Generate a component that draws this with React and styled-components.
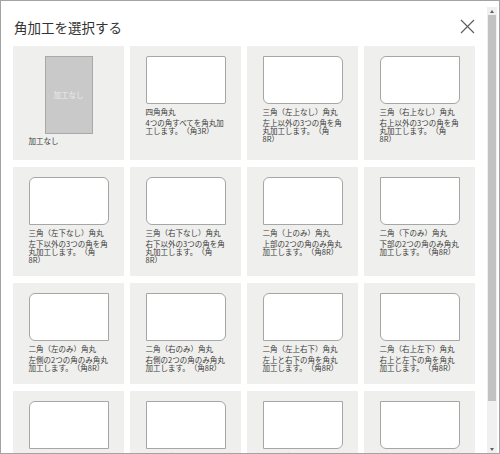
import React from 'react';
import styled, { createGlobalStyle } from 'styled-components';

const GlobalStyle = createGlobalStyle`
  html, body {
    margin: 0;
    padding: 0;
    background: #ffffff;
  }
  body {
    font-family: "Noto Sans CJK JP", "Noto Sans", sans-serif;
    text-spacing-trim: space-all;
  }
`;

const Frame = styled.div`
  box-sizing: border-box;
  width: 500px;
  height: 454px;
  border: 1px solid #a3a3a3;
  padding: 6px 2px 0 0;
  background: #ffffff;
  display: flex;
`;

const Scroller = styled.div`
  flex: 1;
  min-width: 0;
  height: 100%;
  overflow-y: auto;
  scrollbar-width: none;
`;

// classic scrollbar drawn beside the scrolling area
const ScrollBar = styled.div`
  width: 10px;
  height: 100%;
  display: flex;
  flex-direction: column;
  background: #f0f0f0;
`;

const ScrollButton = styled.div`
  height: 8px;
  display: flex;
  align-items: center;
  justify-content: center;
`;

const Arrow = styled.span`
  width: 0;
  height: 0;
  border-left: 2.5px solid transparent;
  border-right: 2.5px solid transparent;
  ${(p) =>
    p.$dir === 'up'
      ? 'border-bottom: 3px solid #606060;'
      : 'border-top: 3px solid #606060;'}
`;

const Track = styled.div`
  flex: 1;
  padding: 0 1px;
`;

const Thumb = styled.div`
  height: 386px;
  background: #c2c2c2;
`;

const Content = styled.div`
  padding: 0 12px 10px 12px;
`;

const Header = styled.div`
  height: 39px;
  display: flex;
  align-items: center;
  justify-content: space-between;
`;

const Title = styled.h2`
  margin: 0;
  padding-left: 1px;
  font-size: 13.5px;
  font-weight: 400;
  color: #333333;
  line-height: 1;
  position: relative;
  top: 1px;
`;

const CloseButton = styled.button`
  width: 16px;
  height: 16px;
  padding: 0;
  margin-right: 0;
  border: none;
  background: transparent;
  display: flex;
  align-items: center;
  justify-content: center;
  cursor: pointer;
`;

const Grid = styled.div`
  display: grid;
  grid-template-columns: repeat(4, 1fr);
  column-gap: 6px;
  row-gap: 7px;
`;

const Card = styled.div`
  background: #efefed;
  padding: 10px 0 12px;
  display: flex;
  justify-content: center;
  cursor: pointer;
`;

const Inner = styled.div`
  width: 80px;
  display: flex;
  flex-direction: column;
`;

const Shape = styled.div`
  box-sizing: border-box;
  width: 80px;
  height: 48px;
  background: #ffffff;
  border: 1px solid #a6a6a6;
  border-radius: ${(p) => p.$r};
`;

const NoneBox = styled.div`
  box-sizing: border-box;
  align-self: center;
  width: 48px;
  height: 78px;
  margin-bottom: -1px;
  background: #c9c9c9;
  border: 1px solid #a9a9a9;
  display: flex;
  align-items: center;
  justify-content: center;
  color: #ececec;
  font-size: 7.5px;
  line-height: 8px;
`;

const Name = styled.div`
  margin-top: 4px;
  margin-bottom: 3px;
  font-size: 7.5px;
  line-height: 8px;
  color: #3c3c3c;
`;

const Desc = styled.div`
  font-size: 7.5px;
  line-height: 8px;
  color: #3c3c3c;
`;

const R8 = '6px';
const r = (tl, tr, br, bl) =>
  [tl, tr, br, bl].map((v) => (v ? R8 : '0')).join(' ');

const items = [
  { name: '四角角丸', desc: '4つの角すべてを角丸加工します。（角3R）', radius: '2px' },
  { name: '三角（左上なし）角丸', desc: '左上以外の3つの角を角丸加工します。（角8R）', radius: r(0, 1, 1, 1) },
  { name: '三角（右上なし）角丸', desc: '右上以外の3つの角を角丸加工します。（角8R）', radius: r(1, 0, 1, 1) },
  { name: '三角（左下なし）角丸', desc: '左下以外の3つの角を角丸加工します。（角8R）', radius: r(1, 1, 1, 0) },
  { name: '三角（右下なし）角丸', desc: '右下以外の3つの角を角丸加工します。（角8R）', radius: r(1, 1, 0, 1) },
  { name: '二角（上のみ）角丸', desc: '上部の2つの角のみ角丸加工します。（角8R）', radius: r(1, 1, 0, 0) },
  { name: '二角（下のみ）角丸', desc: '下部の2つの角のみ角丸加工します。（角8R）', radius: r(0, 0, 1, 1) },
  { name: '二角（左のみ）角丸', desc: '左側の2つの角のみ角丸加工します。（角8R）', radius: r(1, 0, 0, 1) },
  { name: '二角（右のみ）角丸', desc: '右側の2つの角のみ角丸加工します。（角8R）', radius: r(0, 1, 1, 0) },
  { name: '二角（左上右下）角丸', desc: '左上と右下の角を角丸加工します。（角8R）', radius: r(1, 0, 1, 0) },
  { name: '二角（右上左下）角丸', desc: '右上と左下の角を角丸加工します。（角8R）', radius: r(0, 1, 0, 1) },
  { name: '一角（左上のみ）角丸', desc: '左上の角のみ角丸加工します。（角8R）', radius: r(1, 0, 0, 0) },
  { name: '一角（右上のみ）角丸', desc: '右上の角のみ角丸加工します。（角8R）', radius: r(0, 1, 0, 0) },
  { name: '一角（右下のみ）角丸', desc: '右下の角のみ角丸加工します。（角8R）', radius: r(0, 0, 1, 0) },
  { name: '一角（左下のみ）角丸', desc: '左下の角のみ角丸加工します。（角8R）', radius: r(0, 0, 1, 1) },
];

function CloseIcon() {
  return (
    <svg width="15" height="15" viewBox="0 0 15 15">
      <path d="M1 1 L14 14 M14 1 L1 14" stroke="#5f5f5f" strokeWidth="1.2" fill="none" />
    </svg>
  );
}

export default function App() {
  return (
    <>
      <GlobalStyle />
      <Frame>
        <Scroller>
          <Content>
            <Header>
              <Title>角加工を選択する</Title>
              <CloseButton aria-label="閉じる">
                <CloseIcon />
              </CloseButton>
            </Header>
            <Grid>
              <Card>
                <Inner>
                  <NoneBox>加工なし</NoneBox>
                  <Name>加工なし</Name>
                </Inner>
              </Card>
              {items.map((it) => (
                <Card key={it.name}>
                  <Inner>
                    <Shape $r={it.radius} />
                    <Name>{it.name}</Name>
                    <Desc>{it.desc}</Desc>
                  </Inner>
                </Card>
              ))}
            </Grid>
          </Content>
        </Scroller>
        <ScrollBar>
          <ScrollButton>
            <Arrow $dir="up" />
          </ScrollButton>
          <Track>
            <Thumb />
          </Track>
          <ScrollButton>
            <Arrow $dir="down" />
          </ScrollButton>
        </ScrollBar>
      </Frame>
    </>
  );
}
